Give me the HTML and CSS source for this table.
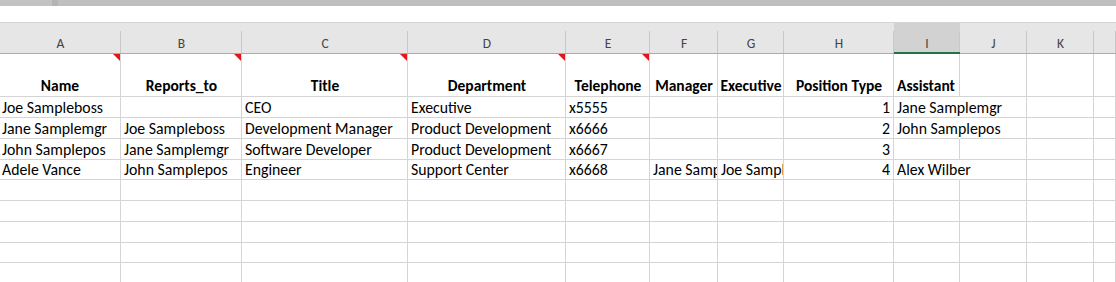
FILE: index.html
```html
<!DOCTYPE html>
<html>
<head>
<meta charset="utf-8">
<link rel="stylesheet" href="styles.css">
</head>
<body>
<div class="topbar"><div class="tb-left"></div><div class="tb-sep"></div><div class="tb-rest"></div></div>
<div class="formula-gap"></div>
<div class="sheet">
  <div class="row colhead">
    <div class="ch">A</div><div class="ch">B</div><div class="ch">C</div><div class="ch">D</div><div class="ch">E</div><div class="ch">F</div><div class="ch">G</div><div class="ch">H</div><div class="ch sel">I</div><div class="ch">J</div><div class="ch">K</div><div class="ch"></div>
  </div>
  <div class="row r1">
    <div class="c b ctr cm">Name</div>
    <div class="c b ctr cm">Reports_to</div>
    <div class="c b ctr cm">Title</div>
    <div class="c b ctr cm">Department</div>
    <div class="c b ctr cm">Telephone</div>
    <div class="c b ctr">Manager</div>
    <div class="c b ctr">Executive</div>
    <div class="c b ctr">Position Type</div>
    <div class="c b">Assistant</div>
    <div class="c"></div><div class="c"></div><div class="c"></div>
  </div>
  <div class="row">
    <div class="c">Joe Sampleboss</div><div class="c"></div><div class="c">CEO</div><div class="c">Executive</div><div class="c">x5555</div><div class="c"></div><div class="c"></div><div class="c num">1</div><div class="c ovr">Jane Samplemgr</div><div class="c"></div><div class="c"></div><div class="c"></div>
  </div>
  <div class="row">
    <div class="c">Jane Samplemgr</div><div class="c">Joe Sampleboss</div><div class="c">Development Manager</div><div class="c">Product Development</div><div class="c">x6666</div><div class="c"></div><div class="c"></div><div class="c num">2</div><div class="c ovr">John Samplepos</div><div class="c"></div><div class="c"></div><div class="c"></div>
  </div>
  <div class="row">
    <div class="c">John Samplepos</div><div class="c">Jane Samplemgr</div><div class="c">Software Developer</div><div class="c">Product Development</div><div class="c">x6667</div><div class="c"></div><div class="c"></div><div class="c num">3</div><div class="c"></div><div class="c"></div><div class="c"></div><div class="c"></div>
  </div>
  <div class="row short">
    <div class="c">Adele Vance</div><div class="c">John Samplepos</div><div class="c">Engineer</div><div class="c">Support Center</div><div class="c">x6668</div><div class="c">Jane Samplemgr</div><div class="c">Joe Sampleboss</div><div class="c num">4</div><div class="c ovr">Alex Wilber</div><div class="c"></div><div class="c"></div><div class="c"></div>
  </div>
  <div class="row"><div class="c"></div><div class="c"></div><div class="c"></div><div class="c"></div><div class="c"></div><div class="c"></div><div class="c"></div><div class="c"></div><div class="c"></div><div class="c"></div><div class="c"></div><div class="c"></div></div>
  <div class="row"><div class="c"></div><div class="c"></div><div class="c"></div><div class="c"></div><div class="c"></div><div class="c"></div><div class="c"></div><div class="c"></div><div class="c"></div><div class="c"></div><div class="c"></div><div class="c"></div></div>
  <div class="row"><div class="c"></div><div class="c"></div><div class="c"></div><div class="c"></div><div class="c"></div><div class="c"></div><div class="c"></div><div class="c"></div><div class="c"></div><div class="c"></div><div class="c"></div><div class="c"></div></div>
  <div class="row short"><div class="c"></div><div class="c"></div><div class="c"></div><div class="c"></div><div class="c"></div><div class="c"></div><div class="c"></div><div class="c"></div><div class="c"></div><div class="c"></div><div class="c"></div><div class="c"></div></div>
  <div class="row"><div class="c"></div><div class="c"></div><div class="c"></div><div class="c"></div><div class="c"></div><div class="c"></div><div class="c"></div><div class="c"></div><div class="c"></div><div class="c"></div><div class="c"></div><div class="c"></div></div>
</div>
</body>
</html>
```
FILE: styles.css
```css
html, body {
  margin: 0;
  padding: 0;
  background: #ffffff;
  overflow: hidden;
}
body {
  width: 1116px;
  height: 282px;
  font-family: Carlito, "Open Sans", "Liberation Sans", sans-serif;
}
.topbar {
  display: flex;
  height: 6px;
}
.tb-left { width: 52px; background: #c2c2c2; }
.tb-sep { width: 6px; background: #b4b4b4; }
.tb-rest { flex: 1; background: #bfbfbf; }
.formula-gap {
  height: 16px;
  background: #ffffff;
  border-bottom: 1px solid #d4d4d4;
}
.sheet {
  width: 1116px;
}
.row {
  display: grid;
  grid-template-columns: 121px 121px 166px 158px 84px 68px 66px 110px 66px 67px 67px 1fr;
  height: 21px;
}
.row.short { height: 20px; }
.colhead {
  height: 31px;
  background: #e6e6e6;
  border-bottom: 1px solid #ababab;
  box-sizing: border-box;
}
.ch {
  position: relative;
  display: flex;
  align-items: center;
  justify-content: center;
  padding-top: 11px;
  font-size: 13.5px;
  color: #444;
}
.ch::after {
  content: "";
  position: absolute;
  right: 0;
  top: 8px;
  bottom: 0;
  width: 1px;
  background: #c8c8c8;
}
.ch.sel {
  background: #d2d2d2;
  border-bottom: 2px solid #217346;
  margin-bottom: -1px;
}
.r1 { height: 43px; }
.c {
  position: relative;
  box-sizing: border-box;
  border-right: 1px solid #d4d4d4;
  border-bottom: 1px solid #d4d4d4;
  font-size: 15.8px;
  color: #000;
  white-space: nowrap;
  overflow: hidden;
  padding: 0 2px 0 3px;
  display: flex;
  align-items: flex-end;
  line-height: 18px;
}
.row .c:first-child { padding-left: 2px; }
.r1 .c { padding-bottom: 1px; }
.b { font-weight: bold; font-size: 15.5px; }
.ctr { justify-content: center; }
.num { justify-content: flex-end; padding-right: 3px; }
.ovr {
  overflow: visible;
  border-right-color: transparent;
  z-index: 1;
}
.cm::after {
  content: "";
  position: absolute;
  top: 0;
  right: 0;
  width: 0;
  height: 0;
  border-top: 7px solid #e3151c;
  border-left: 7px solid transparent;
}
```
